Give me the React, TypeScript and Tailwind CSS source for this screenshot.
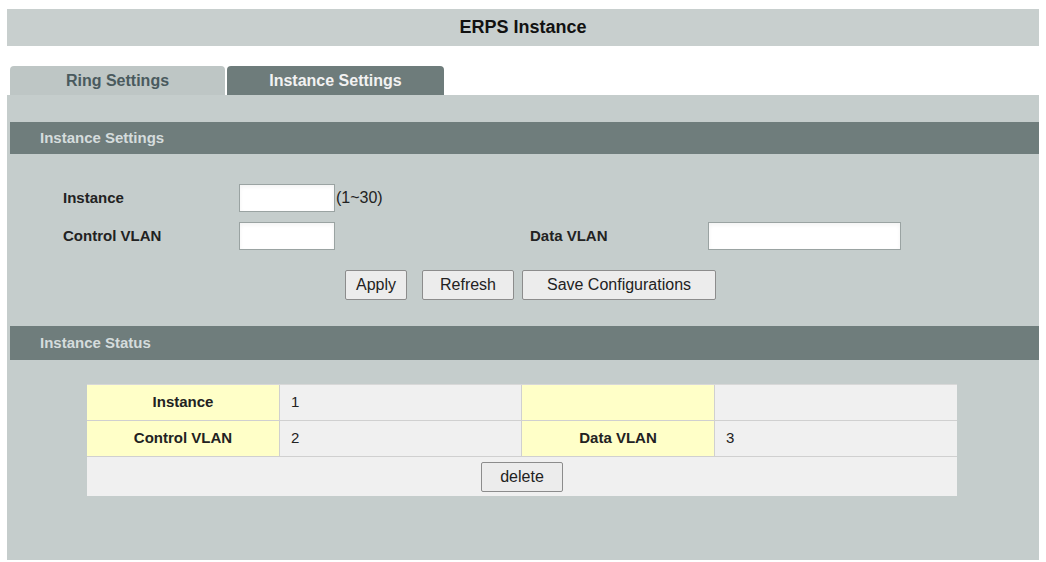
const font = { fontFamily: '"Liberation Sans", Arial, sans-serif' };

const Input = ({ w }: { w: string }) => (
  <input className={`${w} h-[28px] bg-white border border-[#9aa3a2] shadow-inner`} />
);

const Btn = ({ children, w }: { children: React.ReactNode; w: string }) => (
  <button className={`${w} h-[30px] bg-[#ececec] border border-[#8c8c8c] rounded-[2px] text-[16px] text-[#222]`}>
    {children}
  </button>
);

export default function App() {
  return (
    <div style={font} className="w-[1046px] h-[562px] bg-white px-[7px] pt-[9px] text-[#222]">
      <div className="h-[37px] bg-[#c8cfce] flex items-center justify-center font-bold text-[18px] text-[#111]">
        ERPS Instance
      </div>
      <div className="flex mt-[20px] pl-[3px] gap-[2px]">
        <div className="w-[215px] h-[29px] bg-[#bec6c5] rounded-t-[4px] flex items-center justify-center font-bold text-[16px] text-[#4a5a5e]">
          Ring Settings
        </div>
        <div className="w-[217px] h-[29px] bg-[#6e7c7b] rounded-t-[4px] flex items-center justify-center font-bold text-[16px] text-[#f2f2f2]">
          Instance Settings
        </div>
      </div>
      <div className="bg-[#c5cdcc] h-[465px] pt-[27px] pl-[3px]">
        <div className="h-[32px] bg-[#6f7d7c] flex items-center pl-[30px] font-bold text-[15px] text-[#d5dcdc]">
          Instance Settings
        </div>
        <div className="pt-[29px] pl-[53px] text-[15px] font-bold">
          <div className="flex items-center h-[30px]">
            <span className="w-[176px]">Instance</span>
            <Input w="w-[96px]" />
            <span className="font-normal text-[16px] ml-[1px]">(1~30)</span>
          </div>
          <div className="flex items-center h-[30px] mt-[8px]">
            <span className="w-[176px]">Control VLAN</span>
            <Input w="w-[96px]" />
            <span className="ml-[195px] w-[178px]">Data VLAN</span>
            <Input w="w-[193px]" />
          </div>
        </div>
        <div className="flex pl-[335px] mt-[19px]">
          <Btn w="w-[62px]">Apply</Btn>
          <div className="ml-[15px]"><Btn w="w-[92px]">Refresh</Btn></div>
          <div className="ml-[8px]"><Btn w="w-[194px]">Save Configurations</Btn></div>
        </div>
        <div className="mt-[26px] h-[34px] bg-[#6f7d7c] flex items-center pl-[30px] font-bold text-[15px] text-[#d5dcdc]">
          Instance Status
        </div>
        <div className="mt-[24px] ml-[77px] w-[870px] text-[15px]">
          <div className="grid grid-cols-[193px_242px_193px_242px] border-t border-[#d8d8d8]">
            <div className="h-[36px] bg-[#ffffc8] flex items-center justify-center font-bold border-r border-b border-[#d0d0d0]">Instance</div>
            <div className="h-[36px] bg-[#f0f0f0] flex items-center pl-[11px] border-r border-b border-[#d0d0d0]">1</div>
            <div className="h-[36px] bg-[#ffffc8] border-r border-b border-[#d0d0d0]"></div>
            <div className="h-[36px] bg-[#f0f0f0] border-b border-[#d0d0d0]"></div>
            <div className="h-[36px] bg-[#ffffc8] flex items-center justify-center font-bold border-r border-b border-[#d0d0d0]">Control VLAN</div>
            <div className="h-[36px] bg-[#f0f0f0] flex items-center pl-[11px] border-r border-b border-[#d0d0d0]">2</div>
            <div className="h-[36px] bg-[#ffffc8] flex items-center justify-center font-bold border-r border-b border-[#d0d0d0]">Data VLAN</div>
            <div className="h-[36px] bg-[#f0f0f0] flex items-center pl-[11px] border-b border-[#d0d0d0]">3</div>
          </div>
          <div className="h-[39px] bg-[#f0f0f0] flex items-center justify-center">
            <Btn w="w-[82px]">delete</Btn>
          </div>
        </div>
      </div>
    </div>
  );
}
